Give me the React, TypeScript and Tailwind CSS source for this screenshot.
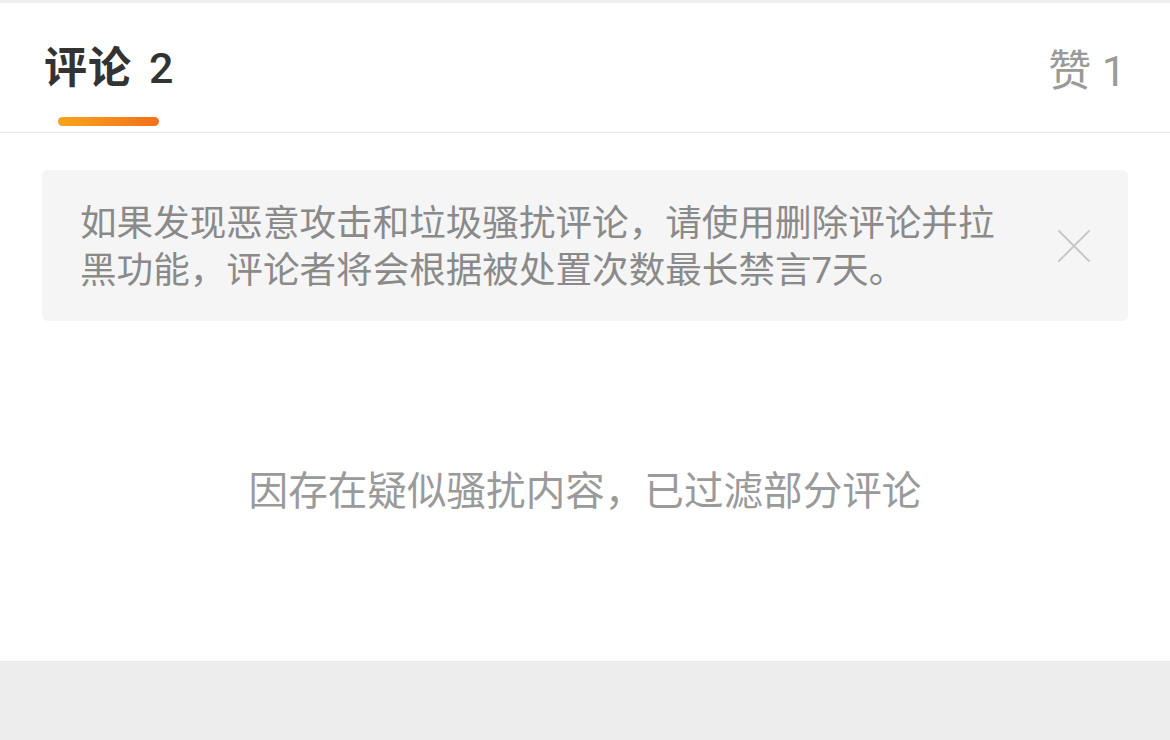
export default function App() {
  return (
    <div className="w-[1170px] h-[740px] flex flex-col bg-white font-['Roboto','Noto_Sans_CJK_SC',sans-serif] overflow-hidden">
      <div className="h-[3px] bg-[#eeeeee]" />

      {/* tabs */}
      <div className="h-[130px] flex justify-between px-[44px] border-b border-[#e6e6e6] shrink-0">
        <div className="flex flex-col items-center pt-[43px]">
          <div className="flex text-[43px] leading-[44px] font-semibold text-[#333333]">
            <span className="tracking-[1px]">评论</span>
            <span className="ml-[17px] font-medium">2</span>
          </div>
          <div className="mt-[27px] h-[9px] w-[101px] rounded-full bg-gradient-to-r from-[#f7a41c] to-[#f3701a]" />
        </div>
        <div className="pt-[46px] text-[43px] leading-[44px] text-[#9a9a9a]">
          赞 1
        </div>
      </div>

      {/* notice */}
      <div className="mt-[37px] mx-[42px] h-[151px] rounded-[6px] bg-[#f5f5f5] flex items-center pl-[38px] pr-[38px]">
        <div className="flex-1 pt-[2px] text-[36.6px] leading-[47px] text-[#8a8a8a]">
          <div>如果发现恶意攻击和垃圾骚扰评论，请使用删除评论并拉</div>
          <div>黑功能，评论者将会根据被处置次数最长禁言7天。</div>
        </div>
        <svg width="32" height="32" viewBox="0 0 32 32" className="shrink-0" fill="none">
          <path d="M1 1L31 31M31 1L1 31" stroke="#c8c8c8" strokeWidth="2" strokeLinecap="round" />
        </svg>
      </div>

      {/* filtered hint */}
      <div className="flex-1 flex items-center justify-center pt-[2px]">
        <div className="text-[39.6px] leading-[48px] text-[#9a9a9a]">
          因存在疑似骚扰内容，已过滤部分评论
        </div>
      </div>

      <div className="h-[79px] bg-[#ededed] border-t border-[#e9e9e9] shrink-0" />
    </div>
  );
}
